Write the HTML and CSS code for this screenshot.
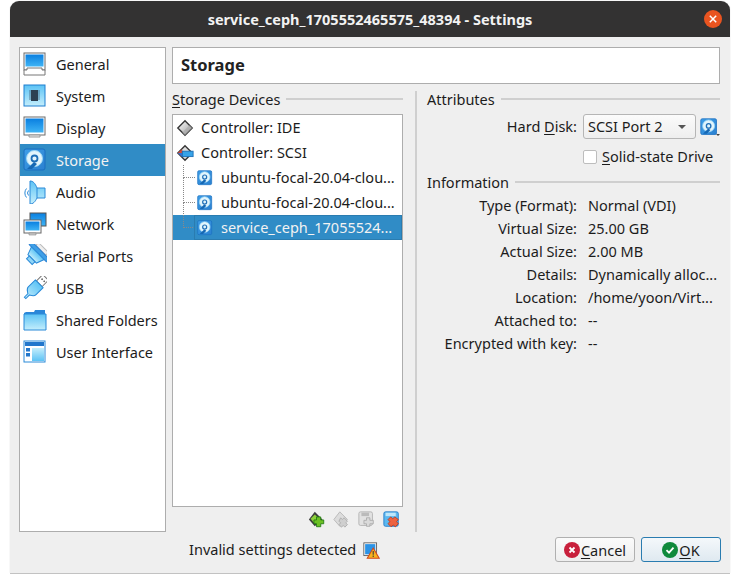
FILE: index.html
```html
<!DOCTYPE html>
<html lang="en">
<head>
<meta charset="utf-8">
<title>Settings</title>
<link rel="stylesheet" href="styles.css">
</head>
<body>
<svg class="sprite" width="0" height="0">
<defs>
<linearGradient id="scr" x1="0" y1="0" x2="0" y2="1"><stop offset="0" stop-color="#0a7fe0"/><stop offset="1" stop-color="#3fb4f5"/></linearGradient>
<linearGradient id="pale" x1="0" y1="0" x2="0" y2="1"><stop offset="0" stop-color="#5cc3f5"/><stop offset="1" stop-color="#c4eefc"/></linearGradient>
<linearGradient id="diskg" x1="0" y1="0" x2="1" y2="1"><stop offset="0" stop-color="#3f9fe8"/><stop offset="1" stop-color="#2a80d0"/></linearGradient>
<linearGradient id="ctlg" x1="0" y1="0" x2="1" y2="1"><stop offset="0" stop-color="#fff"/><stop offset="1" stop-color="#999"/></linearGradient>
<symbol id="i-general" viewBox="0 0 24 24"><rect x="1" y="1" width="21" height="17" fill="#fff" stroke="#6b6b6b"/><rect x="2.500" y="2.500" width="18" height="12" fill="url(#scr)"/><path d="M1 18h3v-2h15v2h3v5H1z" fill="#fff" stroke="#777"/></symbol>
<symbol id="i-system" viewBox="0 0 24 24"><rect x="1" y="1" width="21" height="21" fill="url(#pale)" stroke="#1f7fd0"/><rect x="8" y="6" width="7" height="11" fill="#2d3f52"/><path d="M6 7h2M6 9h2M6 11h2M6 13h2M6 15h2M15 7h2M15 9h2M15 11h2M15 13h2M15 15h2" stroke="#40607c" stroke-width=".8"/></symbol>
<symbol id="i-display" viewBox="0 0 24 24"><rect x="1" y="1" width="21" height="18" fill="#fff" stroke="#6b6b6b"/><rect x="2.500" y="2.500" width="18" height="14" fill="url(#scr)"/><path d="M6 19h11v2H6z" fill="#eee" stroke="#999"/></symbol>
<symbol id="i-disk" viewBox="0 0 24 24"><rect x="1" y="1" width="21" height="21" rx="2" fill="url(#diskg)" stroke="#1a6fc0"/><circle cx="11.500" cy="10.500" r="8" fill="#e2f5fc" stroke="#9ad6f5"/><circle cx="11.500" cy="10.500" r="3" fill="none" stroke="#1e6fb8" stroke-width="1.800"/><path d="M4 21l7-7 3 2-5 5z" fill="#1568b4"/></symbol>
<symbol id="i-audio" viewBox="0 0 24 24"><path d="M7 1c3 0 5 2 7 7h8v10h-8c-2 4-4 6-7 6z" fill="url(#pale)" stroke="#2a8ad8"/><path d="M14 8v10" stroke="#2a8ad8"/><path d="M3.500 8.500a7 7 0 0 0 0 9M5.500 10.500a4 4 0 0 0 0 5" fill="none" stroke="#2a8ad8"/></symbol>
<symbol id="i-network" viewBox="0 0 24 24"><rect x="7" y="1" width="16" height="13" fill="url(#scr)" stroke="#555"/><rect x="1" y="8" width="17" height="13" fill="#fff" stroke="#666"/><rect x="2.500" y="9.500" width="14" height="9" fill="url(#scr)"/><path d="M6 21h7v2H6z" fill="#ccc" stroke="#888" stroke-width=".6"/></symbol>
<symbol id="i-serial" viewBox="0 0 24 24"><g transform="rotate(45 12 12)"><rect x="5" y="0" width="14" height="4" fill="#eee" stroke="#bbb"/><rect x="-1" y="4" width="26" height="4" rx="1.500" fill="#3f9fe6" stroke="#2a7fd0"/><path d="M3 8h18l-3 8H6z" fill="url(#pale)" stroke="#2a8ad8"/><path d="M8 16h8v4H8z" fill="#8fd6f8" stroke="#2a8ad8"/></g></symbol>
<symbol id="i-usb" viewBox="0 0 24 24"><g transform="rotate(45 12 12)"><rect x="8" y="-3" width="8" height="9" fill="#fff" stroke="#777"/><path d="M10 0h1.500v1.500H10zM13 0h1.500v1.500H13z" fill="#555"/><path d="M6.500 6h11v10c0 3-3 4-4.500 5v5h-2v-5c-1.500-1-4.500-2-4.500-5z" fill="url(#pale)" stroke="#2a8ad8"/></g></symbol>
<symbol id="i-folder" viewBox="0 0 24 24"><path d="M1 5l2-1h8l1-2h10v20H1z" fill="#2a86d8"/><path d="M1 6h22v16H1z" fill="url(#pale)" stroke="#2a8ad8"/></symbol>
<symbol id="i-ui" viewBox="0 0 24 24"><rect x="1" y="1" width="21" height="21" fill="#fff" stroke="#2a8ad8"/><rect x="2" y="2" width="19" height="4" fill="#2277cc"/><rect x="9" y="8" width="12" height="13" fill="url(#pale)" transform="matrix(1 0 0 -1 0 29)"/><rect x="3" y="8" width="4" height="3.500" fill="#2277cc"/><rect x="3" y="13" width="4" height="3.500" fill="#2277cc"/></symbol>
<symbol id="i-ctl-ide" viewBox="0 0 20 20"><path d="M10 2l8 8-8 8-8-8z" fill="url(#ctlg)" stroke="#333" stroke-width="1.500"/><path d="M10 18l8-8-3-3-8 8z" fill="#aaa" opacity=".7"/></symbol>
<symbol id="i-ctl-scsi" viewBox="0 0 20 20"><path d="M10 2l8 8-8 8-8-8z" fill="#ddd" stroke="#333" stroke-width="1.500"/><path d="M2 10l4-4 5 5H6z" fill="#d44c3a"/><path d="M2 10l4 4h2v-4z" fill="#3b6fd0"/><rect x="7" y="8" width="12" height="6" fill="#37a3e8" stroke="#1d6fb8"/></symbol>
<symbol id="i-add-ctl" viewBox="0 0 20 20"><path d="M8 1l9 9-9 8-7-8z" fill="#3d3d3d"/><path d="M3 9l5-5 5 5-5 6z" fill="#8ccf3a"/><path d="M10 7h5v3.500h3.500v4.500H15v3.500h-5V15H7v-4.500h3z" fill="#6cc024" stroke="#1f7a10"/></symbol>
<symbol id="i-rem-ctl" viewBox="0 0 20 20"><path d="M8 1l9 9-9 8-7-8z" fill="#dcdcdc" stroke="#b5b5b5"/><path d="M9 8l2 2 2-2 4 4-2 2 2 2-3 3-2-2-2 2-3-3 2-2-2-2z" fill="#cfcfcf" stroke="#aaa"/></symbol>
<symbol id="i-add-att" viewBox="0 0 20 20"><rect x="1" y="1" width="16" height="16" rx="2" fill="#e2e2e2" stroke="#b0b0b0"/><rect x="4" y="2" width="9" height="4" fill="#bbb"/><path d="M10 8h4v3h4v4h-4v3h-4v-3H7v-4h3z" fill="#dadada" stroke="#aaa"/></symbol>
<symbol id="i-rem-att" viewBox="0 0 20 20"><rect x="1" y="1" width="17" height="17" rx="2" fill="#5bb8f0" stroke="#1f78c8"/><rect x="3" y="2" width="12" height="4" fill="#bde6fb"/><path d="M9 7l2.500 2L14 7l4 3-2 2.500 2 2.500-3.500 3.500-2.500-2-2.500 2L6 15l2-2.500L6 10z" fill="#ee6240" stroke="#b83a20"/></symbol>
<symbol id="i-warn" viewBox="0 0 20 20"><rect x="1" y="1" width="15" height="15" fill="#fff" stroke="#555"/><rect x="2.500" y="2.500" width="12" height="12" fill="#2b93e6"/><path d="M12 7l7 12H5z" fill="#f7b320" stroke="#d4481c" stroke-width="1.200"/><path d="M12 10.500v4.500M12 16v1.500" stroke="#333" stroke-width="1.200"/></symbol>
</defs>
</svg>
<main class="window">
  <header class="titlebar">
    <h1 class="title">service_ceph_1705552465575_48394 - Settings</h1>
    <button class="close" type="button" aria-label="Close"><svg viewBox="0 0 18 18" width="18" height="18"><circle cx="9" cy="9" r="9" fill="#e95420"/><path d="M5.800 5.800l6.400 6.400M12.200 5.800l-6.400 6.400" stroke="#fff" stroke-width="1.500"/></svg></button>
  </header>
  <div class="body">
    <div class="columns">
      <nav class="sidebar">
        <a class="nav-item"><svg class="nav-icon"><use href="#i-general"/></svg><span>General</span></a>
        <a class="nav-item"><svg class="nav-icon"><use href="#i-system"/></svg><span>System</span></a>
        <a class="nav-item"><svg class="nav-icon"><use href="#i-display"/></svg><span>Display</span></a>
        <a class="nav-item selected"><svg class="nav-icon"><use href="#i-disk"/></svg><span>Storage</span></a>
        <a class="nav-item"><svg class="nav-icon"><use href="#i-audio"/></svg><span>Audio</span></a>
        <a class="nav-item"><svg class="nav-icon"><use href="#i-network"/></svg><span>Network</span></a>
        <a class="nav-item"><svg class="nav-icon"><use href="#i-serial"/></svg><span>Serial Ports</span></a>
        <a class="nav-item"><svg class="nav-icon"><use href="#i-usb"/></svg><span>USB</span></a>
        <a class="nav-item"><svg class="nav-icon"><use href="#i-folder"/></svg><span>Shared Folders</span></a>
        <a class="nav-item"><svg class="nav-icon"><use href="#i-ui"/></svg><span>User Interface</span></a>
      </nav>
      <section class="page">
        <h2 class="page-title">Storage</h2>
        <div class="panes">
          <div class="devices">
            <div class="group-head"><span><u>S</u>torage Devices</span><i class="rule"></i></div>
            <div class="tree">
              <div class="tree-row"><svg class="ctl-icon"><use href="#i-ctl-ide"/></svg><span>Controller: IDE</span></div>
              <div class="tree-row"><svg class="ctl-icon"><use href="#i-ctl-scsi"/></svg><span>Controller: SCSI</span></div>
              <div class="tree-row child"><i class="branch first"></i><svg class="disk-icon"><use href="#i-disk"/></svg><span>ubuntu-focal-20.04-clou...</span></div>
              <div class="tree-row child"><i class="branch"></i><svg class="disk-icon"><use href="#i-disk"/></svg><span>ubuntu-focal-20.04-clou...</span></div>
              <div class="tree-row child selected"><i class="branch"></i><svg class="disk-icon"><use href="#i-disk"/></svg><span>service_ceph_17055524...</span></div>
            </div>
            <div class="tree-tools">
              <svg class="tool"><use href="#i-add-ctl"/></svg>
              <svg class="tool"><use href="#i-rem-ctl"/></svg>
              <svg class="tool"><use href="#i-add-att"/></svg>
              <svg class="tool"><use href="#i-rem-att"/></svg>
            </div>
          </div>
          <div class="attributes">
            <div class="group-head"><span>Attributes</span><i class="rule"></i></div>
            <div class="disk-row">
              <span class="label">Hard <u>D</u>isk:</span>
              <div class="combo"><span>SCSI Port 2</span><i class="caret"></i></div>
              <div class="combo-tool"><svg class="combo-icon"><use href="#i-disk"/></svg><i class="mini-caret"></i></div>
            </div>
            <label class="check-row"><i class="checkbox"></i><span><u>S</u>olid-state Drive</span></label>
            <div class="group-head info-head"><span>Information</span><i class="rule"></i></div>
            <dl class="info">
              <dt>Type (Format):</dt><dd>Normal (VDI)</dd>
              <dt>Virtual Size:</dt><dd>25.00 GB</dd>
              <dt>Actual Size:</dt><dd>2.00 MB</dd>
              <dt>Details:</dt><dd>Dynamically alloc...</dd>
              <dt>Location:</dt><dd>/home/yoon/Virt...</dd>
              <dt>Attached to:</dt><dd>--</dd>
              <dt>Encrypted with key:</dt><dd>--</dd>
            </dl>
          </div>
        </div>
      </section>
    </div>
    <footer class="footer">
      <div class="status"><span>Invalid settings detected</span><svg class="warn"><use href="#i-warn"/></svg></div>
      <div class="buttons">
        <button class="btn" type="button"><svg viewBox="0 0 16 16" width="16" height="16"><circle cx="8" cy="8" r="8" fill="#c8203c"/><path d="M5.500 5.500l5 5M10.500 5.500l-5 5" stroke="#fff" stroke-width="1.800"/></svg><span><u>C</u>ancel</span></button>
        <button class="btn default" type="button"><svg viewBox="0 0 16 16" width="16" height="16"><circle cx="8" cy="8" r="8" fill="#0f8a3c"/><path d="M4.500 8.200l2.500 2.500 4.500-5" stroke="#fff" stroke-width="1.800" fill="none"/></svg><span><u>O</u>K</span></button>
      </div>
    </footer>
  </div>
</main>
</body>
</html>
```
FILE: styles.css
```css
* { box-sizing: border-box; }
html, body { margin: 0; height: 100%; }
body {
  background: #fff;
  padding: 1px 10px 0 10px;
  font: 14.5px/16px "Noto Sans", "Open Sans", sans-serif;
  color: #1c1c1c;
  overflow: hidden;
}
.sprite { display: block; height: 0; width: 0; }
u { text-underline-offset: 2px; }
.window {
  width: 720px;
  height: 572px;
  display: flex;
  flex-direction: column;
  background: #efefef;
  border-radius: 9px 9px 0 0;
  box-shadow: 0 0 1px #bbb, 0 1px 0 #c4c4c4;
}
.titlebar {
  height: 36px;
  flex: none;
  display: flex;
  align-items: center;
  justify-content: center;
  background: #333232;
  border-radius: 9px 9px 0 0;
  position: relative;
}
.title { margin: 0; font-size: 14.5px; font-weight: 700; color: #f2f2f2; }
.close {
  position: absolute; right: 8px; top: 9px;
  width: 18px; height: 18px; padding: 0; border: 0; background: none; display: block;
}
.close svg { display: block; }
.body { flex: 1; display: flex; flex-direction: column; padding: 10px 10px 9px 9px; min-height: 0; }
.columns { flex: 1; display: flex; gap: 6px; min-height: 0; }
.sidebar {
  width: 147px; flex: none; background: #fff; border: 1px solid #adadad;
}
.nav-item { height: 32px; display: flex; align-items: center; gap: 9px; padding-left: 3px; white-space: nowrap; }
.nav-item.selected { background: #308cc6; color: #f2f2f2; }
.nav-icon { width: 24px; height: 24px; flex: none; }
.page { flex: 1; display: flex; flex-direction: column; min-width: 0; }
.page-title {
  margin: 0; height: 37px; flex: none; background: #fff; border: 1px solid #adadad;
  font-size: 16.5px; font-weight: 700; line-height: 33px; padding-left: 8px; color: #222;
}
.panes { flex: 1; display: flex; min-height: 0; padding-top: 6px; }
.devices { width: 243px; flex: none; display: flex; flex-direction: column; padding-right: 12px; }
.group-head { display: flex; align-items: center; gap: 6px; height: 18px; white-space: nowrap; }
.rule { flex: 1; height: 2px; background: #cfcfcf; }
.tree { margin-top: 6px; flex: 1; background: #fff; border: 1px solid #adadad; min-height: 0; }
.tree-row { height: 25px; display: flex; align-items: center; padding-left: 3px; gap: 7px; white-space: nowrap; position: relative; }
.tree-row span { padding-bottom: 2px; }
.tree-row.selected { background: #308cc6; color: #f2f2f2; }
.tree-row.selected::after { content: ""; position: absolute; left: 21px; top: 0; right: 0; bottom: 0; border: 1px solid #2a7cb0; }
.tree-row.child { padding-left: 24px; gap: 8px; }
.ctl-icon { width: 18px; height: 18px; flex: none; }
.disk-icon { width: 16px; height: 16px; flex: none; }
.branch { position: absolute; left: 10px; top: -12px; width: 12px; height: 25px; border-left: 1px dotted #888; border-bottom: 1px dotted #888; }
.branch.first { top: 0; height: 13px; }
.tree-tools { height: 25px; flex: none; display: flex; justify-content: flex-end; align-items: center; gap: 8px; padding-right: 3px; }
.tool { width: 17px; height: 17px; }
.attributes { flex: 1; min-width: 0; border-left: 2px solid #cfcfcf; padding-left: 10px; margin-top: 1px; }
.attributes > .group-head:first-child { margin-top: -1px; }
.disk-row { display: grid; grid-template-columns: 156px 113px 24px; align-items: center; height: 25px; margin-top: 6px; }
.disk-row .label, dt { text-align: right; }
.label { padding: 0 6px 2px 0; white-space: nowrap; }
.combo {
  height: 25px; border: 1px solid #b5b5b5; border-radius: 3px; background: linear-gradient(#fbfbfb, #eeeeee);
  display: flex; align-items: center; justify-content: space-between; padding: 0 9px 0 4px;
}
.combo span { padding-bottom: 2px; }
.caret { width: 0; height: 0; border: 4px solid transparent; border-top: 4px solid #555; border-bottom: 0; }
.combo-tool { position: relative; height: 18px; margin-left: 4px; }
.combo-icon { width: 18px; height: 18px; display: block; }
.mini-caret { position: absolute; left: 16px; bottom: 0; width: 0; height: 0; border: 2px solid transparent; border-top: 2px solid #444; border-bottom: 0; }
.check-row { display: flex; align-items: center; gap: 5px; margin: 10px 0 0 156px; height: 15px; white-space: nowrap; }
.check-row span { padding-bottom: 2px; }
.checkbox { width: 14px; height: 14px; background: #fff; border: 1px solid #bdbdbd; border-radius: 2px; flex: none; }
.info-head { margin-top: 9px; }
.info {
  margin: 2px 0 0 0; display: grid; grid-template-columns: 150px 1fr; column-gap: 11px; grid-auto-rows: 23px; align-items: center; white-space: nowrap;
}
dd { margin: 0; }
.footer { height: 32px; flex: none; display: flex; align-items: flex-end; padding-bottom: 2px; }
.status { display: flex; align-items: center; gap: 7px; margin-left: 170px; margin-bottom: 3px; }
.status span { padding-bottom: 2px; }
.warn { width: 17px; height: 17px; }
.buttons { margin-left: auto; margin-right: -1px; display: flex; gap: 6px; }
.btn {
  width: 80px; height: 25px; border: 1px solid #b0b0b0; border-radius: 3px; background: linear-gradient(#fbfbfb, #eeeeee);
  font: inherit; color: inherit; display: flex; align-items: center; justify-content: center; gap: 1px; padding: 0;
}
.btn.default { border-color: #2a7cb0; background: linear-gradient(#f4f8fb, #dfe9f0); }
```
